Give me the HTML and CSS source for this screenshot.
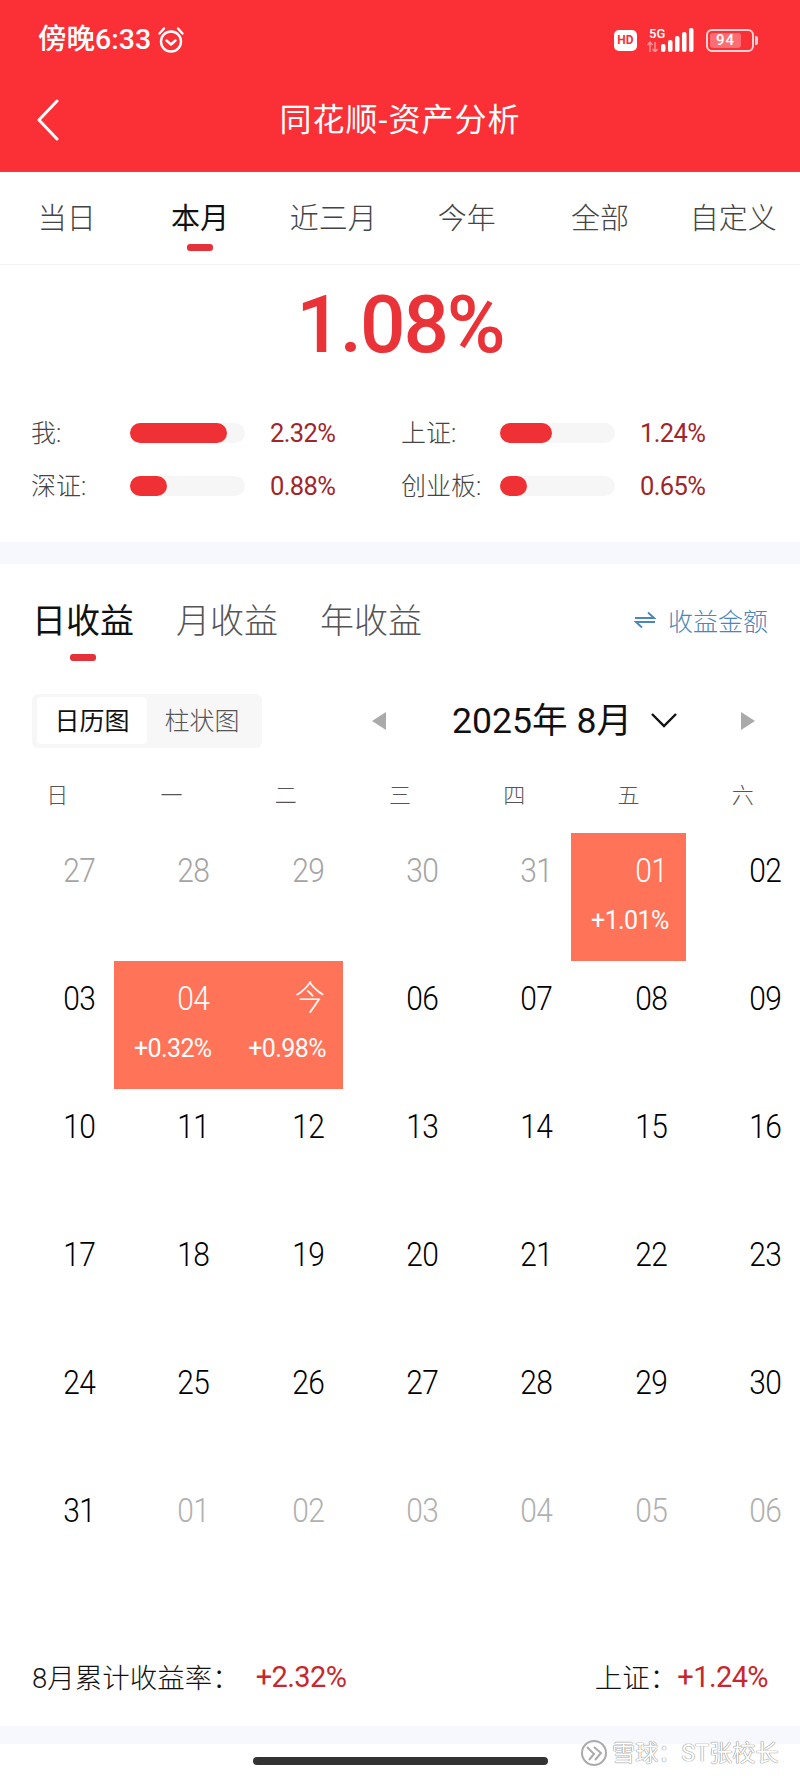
FILE: index.html
```html
<!DOCTYPE html>
<html lang="zh">
<head>
<meta charset="utf-8">
<title>同花顺-资产分析</title>
<link rel="stylesheet" href="styles.css">
</head>
<body>
<div class="page">
  <header class="header">
    <div class="status">
      <div class="status-left">
        <span class="time">傍晚6:33</span>
        <svg class="alarm" viewBox="0 0 28 28" width="28" height="28" fill="none" stroke="#fff" stroke-width="2.4" stroke-linecap="round" stroke-linejoin="round"><circle cx="14" cy="15.5" r="10"/><path d="M9.5 14.5l4.5 4 4.5-4"/><path d="M2.5 7.5L7 2.5M25.5 7.5L21 2.5"/></svg>
      </div>
      <div class="status-right">
        <span class="hd">HD</span>
        <div class="signal">
          <span class="five-g">5G</span>
          <svg class="bars" viewBox="0 0 50 24" width="50" height="24" fill="#fff"><path d="M3 14v10M0.5 17L3 14l2.5 3M8 14v10M5.5 21L8 24l2.5-3" fill="none" stroke="#fff" stroke-width="1.4" opacity=".5"/><rect x="14" y="16" width="4.5" height="8" rx="2"/><rect x="21" y="12" width="4.5" height="12" rx="2"/><rect x="28" y="8" width="4.5" height="16" rx="2"/><rect x="35" y="4" width="4.5" height="20" rx="2"/><rect x="42" y="0" width="4.5" height="24" rx="2"/></svg>
        </div>
        <div class="battery"><span class="battery-level">94</span></div>
        <span class="battery-nub"></span>
      </div>
    </div>
    <div class="nav">
      <svg class="back" viewBox="0 0 24 42" width="24" height="42" fill="none" stroke="#fff" stroke-width="3" stroke-linecap="round" stroke-linejoin="round"><path d="M21 2L3 21l18 19"/></svg>
      <h1 class="title">同花顺-资产分析</h1>
    </div>
  </header>

  <nav class="range-tabs">
    <div class="range-tab">当日</div>
    <div class="range-tab active">本月</div>
    <div class="range-tab">近三月</div>
    <div class="range-tab">今年</div>
    <div class="range-tab">全部</div>
    <div class="range-tab">自定义</div>
  </nav>

  <section class="summary">
    <div class="hero">1.08%</div>
    <div class="stats">
      <div class="stat"><span class="stat-label">我:</span><span class="track"><span class="fill" style="width:97px"></span></span><span class="stat-value">2.32%</span></div>
      <div class="stat"><span class="stat-label">上证:</span><span class="track"><span class="fill" style="width:52px"></span></span><span class="stat-value">1.24%</span></div>
      <div class="stat"><span class="stat-label">深证:</span><span class="track"><span class="fill" style="width:37px"></span></span><span class="stat-value">0.88%</span></div>
      <div class="stat"><span class="stat-label">创业板:</span><span class="track"><span class="fill" style="width:27px"></span></span><span class="stat-value">0.65%</span></div>
    </div>
  </section>

  <div class="band band-top"></div>

  <section class="earnings">
    <div class="earn-tabs">
      <div class="earn-tab active">日收益</div>
      <div class="earn-tab">月收益</div>
      <div class="earn-tab">年收益</div>
      <div class="earn-link">
        <svg class="swap" viewBox="0 0 22 18" width="22" height="18" fill="none" stroke="#4a86b8" stroke-width="1.8"><path d="M1 7h19L14 1.5"/><path d="M21 11H2l6 5.5"/></svg>
        <span>收益金额</span>
      </div>
    </div>

    <div class="controls">
      <div class="segment">
        <span class="seg on">日历图</span>
        <span class="seg">柱状图</span>
      </div>
      <span class="tri tri-left"></span>
      <span class="month">2025年 8月</span>
      <svg class="chevron" viewBox="0 0 28 16" width="28" height="16" fill="none" stroke="#111" stroke-width="2.4"><path d="M2 2l12 12L26 2"/></svg>
      <span class="tri tri-right"></span>
    </div>

    <div class="weekdays">
      <span>日</span><span>一</span><span>二</span><span>三</span><span>四</span><span>五</span><span>六</span>
    </div>

    <div class="calendar">
      <div class="day muted"><span class="num">27</span></div>
      <div class="day muted"><span class="num">28</span></div>
      <div class="day muted"><span class="num">29</span></div>
      <div class="day muted"><span class="num">30</span></div>
      <div class="day muted"><span class="num">31</span></div>
      <div class="day gain"><span class="num">01</span><span class="pct">+1.01%</span></div>
      <div class="day"><span class="num">02</span></div>

      <div class="day"><span class="num">03</span></div>
      <div class="day gain"><span class="num">04</span><span class="pct">+0.32%</span></div>
      <div class="day gain"><span class="num">今</span><span class="pct">+0.98%</span></div>
      <div class="day"><span class="num">06</span></div>
      <div class="day"><span class="num">07</span></div>
      <div class="day"><span class="num">08</span></div>
      <div class="day"><span class="num">09</span></div>

      <div class="day"><span class="num">10</span></div>
      <div class="day"><span class="num">11</span></div>
      <div class="day"><span class="num">12</span></div>
      <div class="day"><span class="num">13</span></div>
      <div class="day"><span class="num">14</span></div>
      <div class="day"><span class="num">15</span></div>
      <div class="day"><span class="num">16</span></div>

      <div class="day"><span class="num">17</span></div>
      <div class="day"><span class="num">18</span></div>
      <div class="day"><span class="num">19</span></div>
      <div class="day"><span class="num">20</span></div>
      <div class="day"><span class="num">21</span></div>
      <div class="day"><span class="num">22</span></div>
      <div class="day"><span class="num">23</span></div>

      <div class="day"><span class="num">24</span></div>
      <div class="day"><span class="num">25</span></div>
      <div class="day"><span class="num">26</span></div>
      <div class="day"><span class="num">27</span></div>
      <div class="day"><span class="num">28</span></div>
      <div class="day"><span class="num">29</span></div>
      <div class="day"><span class="num">30</span></div>

      <div class="day"><span class="num">31</span></div>
      <div class="day faint"><span class="num">01</span></div>
      <div class="day faint"><span class="num">02</span></div>
      <div class="day faint"><span class="num">03</span></div>
      <div class="day faint"><span class="num">04</span></div>
      <div class="day faint"><span class="num">05</span></div>
      <div class="day faint"><span class="num">06</span></div>
    </div>

    <div class="totals">
      <div class="total-left"><span class="total-label">8月累计收益率：</span><span class="total-value">+2.32%</span></div>
      <div class="total-right"><span class="total-label">上证：</span><span class="total-value">+1.24%</span></div>
    </div>
  </section>

  <div class="band band-bottom"></div>
  <div class="home-area"><span class="home-bar"></span></div>

  <div class="watermark">
    <svg class="wm-logo" viewBox="0 0 28 28" width="28" height="28" fill="none" stroke="#aaa" stroke-width="2"><circle cx="14" cy="14" r="12"/><path d="M7 8l7 7-5 6M14 8l7 6-6 7"/></svg>
    <span>雪球：ST张校长</span>
  </div>
</div>
</body>
</html>
```

FILE: styles.css
```css
* { box-sizing: border-box; }

html, body { margin: 0; padding: 0; background: #fff; }

body {
  font-family: Roboto, "Noto Sans CJK SC", sans-serif;
  color: #111;
}

.page {
  position: relative;
  width: 800px;
  height: 1778px;
  overflow: hidden;
  background: #fff;
}

/* Header */
.header {
  height: 172px;
  background: #fb3037;
  color: #fff;
  border-bottom: 1px solid #d9484c;
}

.status {
  height: 80px;
  display: flex;
  align-items: center;
  justify-content: space-between;
  padding: 0 42px 0 38px;
}

.status-left { display: flex; align-items: center; gap: 6px; }

.time { font-size: 28.5px; line-height: 36px; font-weight: 500; white-space: nowrap; }

.alarm { display: block; }

.status-right { display: flex; align-items: center; }

.hd {
  width: 23px;
  height: 21px;
  border-radius: 5px;
  background: #fff;
  color: #fb3037;
  font-size: 12px;
  font-weight: 700;
  line-height: 21px;
  text-align: center;
}

.signal {
  position: relative;
  width: 50px;
  height: 24px;
  margin: 0 0 0 10px;
}

.five-g {
  position: absolute;
  left: 2px;
  top: -1px;
  font-size: 13px;
  line-height: 13px;
  font-weight: 500;
}

.bars { display: block; }

.battery {
  width: 48px;
  height: 23px;
  margin-left: 9px;
  border: 2px solid #fbd3d4;
  border-radius: 6px;
  padding: 2px;
}

.battery-level {
  display: block;
  width: 31px;
  height: 15px;
  border-radius: 3px;
  background: rgba(255, 255, 255, .3);
  font-size: 15px;
  font-weight: 500;
  line-height: 15px;
  text-align: center;
  letter-spacing: 1px;
}

.battery-nub {
  width: 3px;
  height: 9px;
  margin-left: 1px;
  border-radius: 0 2px 2px 0;
  background: #fbd3d4;
}

.nav {
  position: relative;
  height: 80px;
  display: flex;
  align-items: center;
  justify-content: center;
}

.back { position: absolute; left: 36px; top: 19px; }

.title {
  margin: 0;
  font-size: 32px;
  line-height: 40px;
  font-weight: 400;
  letter-spacing: 1px;
}

/* Range tabs */
.range-tabs {
  height: 93px;
  display: flex;
  border-bottom: 1px solid #f2f2f4;
}

.range-tab {
  position: relative;
  flex: 1;
  padding-top: 27px;
  text-align: center;
  font-size: 29px;
  line-height: 40px;
  font-weight: 300;
  color: #444;
}

.range-tab.active { color: #111; font-weight: 400; }

.range-tab.active::after {
  content: "";
  position: absolute;
  left: 54px;
  top: 72px;
  width: 26px;
  height: 7px;
  border-radius: 3px;
  background: #e5323a;
}

/* Summary */
.summary { padding-bottom: 30px; }

.hero {
  height: 141px;
  padding-top: 30px;
  text-align: center;
  font-size: 80px;
  line-height: 60px;
  font-weight: 500;
  color: #e93338;
  letter-spacing: -2px;
}

.stats {
  display: grid;
  grid-template-columns: 370px 370px;
  padding-left: 31px;
}

.stat { height: 53px; display: flex; align-items: center; }

.stat-label {
  width: 99px;
  margin-bottom: 4px;
  font-size: 25px;
  font-weight: 300;
  color: #444;
}

.track {
  width: 115px;
  height: 20px;
  border-radius: 10px;
  background: #f6f6f7;
}

.fill {
  display: block;
  height: 20px;
  border-radius: 10px;
  background: #ef3135;
}

.stat-value {
  margin-left: 25px;
  font-size: 25.5px;
  color: #a0262b;
  letter-spacing: -.6px;
}

.band { background: #f7f8fd; }
.band-top { height: 22px; }
.band-bottom { height: 18px; }

/* Earnings */
.earn-tabs {
  display: flex;
  height: 110px;
  padding: 32px 32px 0;
  gap: 42px;
}

.earn-tab {
  position: relative;
  height: 48px;
  font-size: 34px;
  line-height: 50px;
  font-weight: 300;
  color: #555;
}

.earn-tab.active { color: #111; font-weight: 400; }

.earn-tab.active::after {
  content: "";
  position: absolute;
  left: 38px;
  top: 58px;
  width: 26px;
  height: 7px;
  border-radius: 3px;
  background: #e5323a;
}

.earn-link {
  display: flex;
  align-items: center;
  gap: 12px;
  height: 48px;
  margin-left: auto;
  font-size: 25px;
  font-weight: 300;
  color: #4a86b8;
}

.controls {
  display: flex;
  align-items: center;
  height: 54px;
  margin: 20px 0 0 32px;
}

.segment {
  display: flex;
  width: 230px;
  height: 54px;
  padding: 3px 5px 4px;
  border-radius: 6px;
  background: #f7f7f7;
}

.seg {
  width: 110px;
  text-align: center;
  font-size: 25px;
  line-height: 50px;
  font-weight: 300;
  color: #555;
}

.seg.on { background: #fff; color: #111; font-weight: 400; border-radius: 4px; }

.tri { width: 0; height: 0; border-style: solid; }

.tri-left {
  margin-left: 110px;
  border-width: 9px 14px 9px 0;
  border-color: transparent #aaa transparent transparent;
}

.tri-right {
  margin-left: 63px;
  border-width: 9px 0 9px 14px;
  border-color: transparent transparent transparent #aaa;
}

.month {
  margin-left: 66px;
  font-size: 35.6px;
  line-height: 50px;
  white-space: nowrap;
  color: #111;
}

.chevron { margin-left: 18px; margin-top: -2px; }

.weekdays {
  display: grid;
  grid-template-columns: repeat(7, 1fr);
  margin-top: 33px;
  height: 30px;
  text-align: center;
  font-size: 22px;
  line-height: 30px;
  font-weight: 300;
  color: #555;
}

.calendar {
  display: grid;
  grid-template-columns: repeat(7, 1fr);
  grid-auto-rows: 128px;
  margin-top: 22px;
}

.day {
  display: flex;
  flex-direction: column;
  align-items: flex-end;
  padding: 17px 19px 0 0;
  color: #000;
}

.num {
  font-size: 34px;
  line-height: 40px;
  font-weight: 300;
  letter-spacing: -.8px;
  transform: scaleX(.88);
  transform-origin: right center;
}

.day.muted { color: #a4a4a4; }
.day.faint { color: #b0b0b0; }

.day.gain { background: #ff7358; color: #fff; }

.pct {
  margin-top: 16px;
  margin-right: -2px;
  font-size: 25px;
  line-height: 30px;
  letter-spacing: -.6px;
}

.totals {
  display: flex;
  justify-content: space-between;
  height: 125px;
  padding: 56px 32px 0;
}

.total-left, .total-right { display: flex; align-items: center; height: 40px; }

.total-label { margin-bottom: 3px; font-size: 27.5px; font-weight: 300; color: #111; }

.total-left .total-value { margin-left: 16px; }

.total-value { font-size: 29px; color: #c8282d; letter-spacing: -.6px; }

.home-area { padding-top: 13px; display: flex; justify-content: center; }

.home-bar {
  width: 295px;
  height: 8px;
  border-radius: 4px;
  background: #333;
}

.watermark {
  position: absolute;
  left: 580px;
  top: 1739px;
  display: flex;
  align-items: center;
  gap: 4px;
  font-size: 23.2px;
  line-height: 28px;
  color: #fff;
  text-shadow: 0 0 1px #777, 0 0 1px #777;
  white-space: nowrap;
}

.wm-logo { display: block; }
```
